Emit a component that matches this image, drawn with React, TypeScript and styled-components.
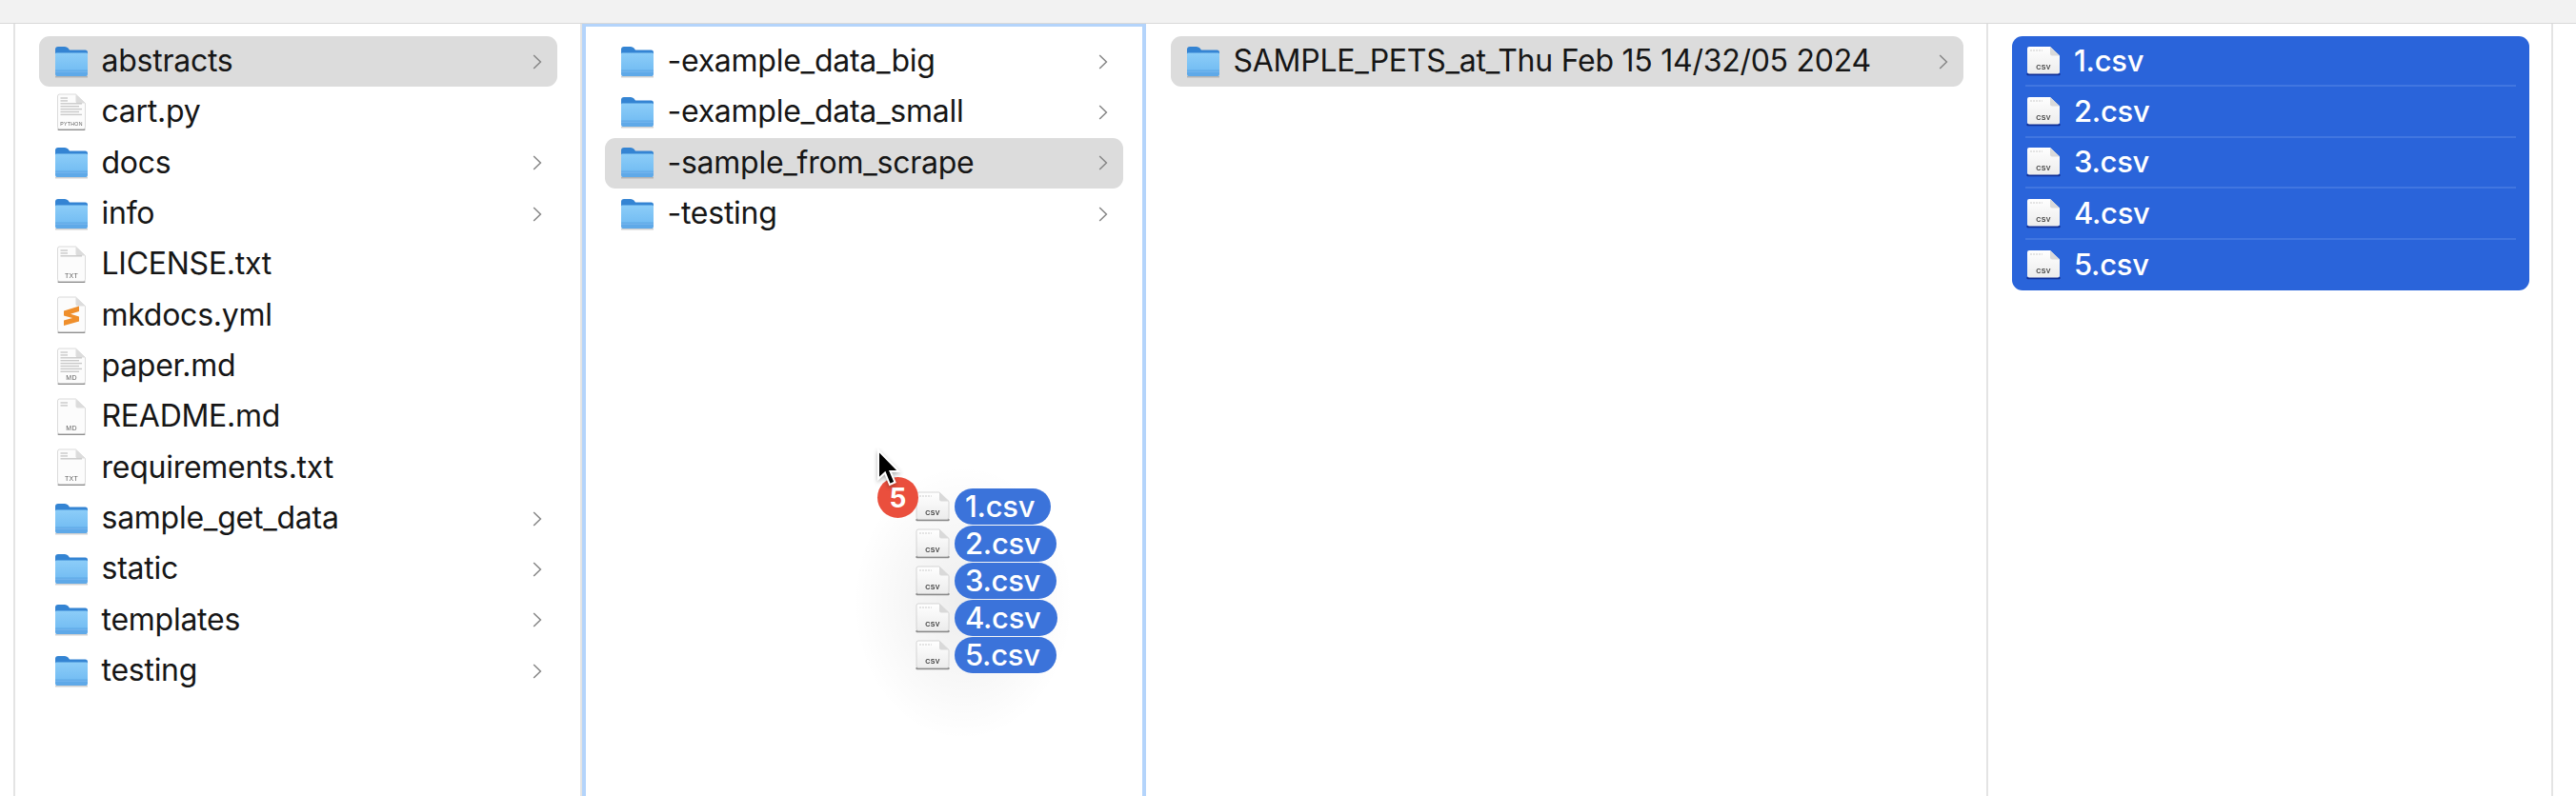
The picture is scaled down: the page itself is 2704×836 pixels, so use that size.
import styled, { createGlobalStyle } from 'styled-components';

type FileKind = 'py' | 'txt' | 'md' | 'mdShort' | 'yml' | 'csv';

type Entry = {
  name: string;
  kind: 'folder' | FileKind;
  active?: boolean;
};

const rootEntries: Entry[] = [
  { name: 'abstracts', kind: 'folder', active: true },
  { name: 'cart.py', kind: 'py' },
  { name: 'docs', kind: 'folder' },
  { name: 'info', kind: 'folder' },
  { name: 'LICENSE.txt', kind: 'txt' },
  { name: 'mkdocs.yml', kind: 'yml' },
  { name: 'paper.md', kind: 'md' },
  { name: 'README.md', kind: 'mdShort' },
  { name: 'requirements.txt', kind: 'txt' },
  { name: 'sample_get_data', kind: 'folder' },
  { name: 'static', kind: 'folder' },
  { name: 'templates', kind: 'folder' },
  { name: 'testing', kind: 'folder' },
];

const abstractEntries: Entry[] = [
  { name: '-example_data_big', kind: 'folder' },
  { name: '-example_data_small', kind: 'folder' },
  { name: '-sample_from_scrape', kind: 'folder', active: true },
  { name: '-testing', kind: 'folder' },
];

const scrapeEntries: Entry[] = [
  { name: 'SAMPLE_PETS_at_Thu Feb 15 14/32/05 2024', kind: 'folder', active: true },
];

const csvNames = ['1.csv', '2.csv', '3.csv', '4.csv', '5.csv'];

const labels: Record<FileKind, string> = {
  py: 'PYTHON',
  txt: 'TXT',
  md: 'MD',
  mdShort: 'MD',
  yml: '',
  csv: 'CSV',
};

const lineCounts: Record<FileKind, number> = {
  py: 7,
  txt: 3,
  md: 8,
  mdShort: 2,
  yml: 0,
  csv: 1,
};

function FolderIcon() {
  return (
    <IconSvg width="36" height="34" viewBox="0 0 36 34">
      <defs>
        <linearGradient id="folderBody" x1="0" y1="0" x2="0" y2="1">
          <stop offset="0" stopColor="#8ccdf8" />
          <stop offset="1" stopColor="#74bdf3" />
        </linearGradient>
      </defs>
      <path d="M1 32.6 h34" stroke="#000" strokeOpacity=".18" strokeWidth="1.6" />
      <path
        d="M1 4 Q1 1 4 1 H11 Q13 1 14.5 2.6 L16 4.4 H32.5 Q35 4.4 35 7 V12 H1 Z"
        fill="#3484d3"
      />
      <path d="M1 8.6 Q1 7.6 2.4 7.6 H33.6 Q35 7.6 35 8.6 V26 H1 Z" fill="url(#folderBody)" />
      <path d="M1 25.5 H35 V29.4 Q35 32 32.5 32 H3.5 Q1 32 1 29.4 Z" fill="#5fa9e8" />
      <path d="M1 27.2 H35" stroke="#7dbdf0" strokeWidth=".8" />
    </IconSvg>
  );
}

function CsvIcon({ inverted }: { inverted?: boolean }) {
  return (
    <IconSvg width="36" height="32" viewBox="0 0 36 32">
      <defs>
        <linearGradient id="csvPage" x1="0" y1="0" x2="0" y2="1">
          <stop offset="0" stopColor="#ffffff" />
          <stop offset="1" stopColor="#ececec" />
        </linearGradient>
      </defs>
      <path
        d="M1.5 30 H34.5"
        stroke={inverted ? '#0f2f96' : '#8a8a8a'}
        strokeWidth="2.4"
        strokeLinecap="round"
      />
      <path
        d="M1 3 Q1 1 3 1 H25 L35 10.5 V27.5 Q35 29.5 33 29.5 H3 Q1 29.5 1 27.5 Z"
        fill="url(#csvPage)"
        stroke={inverted ? 'none' : '#cbcbcb'}
        strokeWidth=".8"
      />
      <path d="M25 1 V8.5 Q25 10.5 27 10.5 H35 Z" fill="#d9d9d9" />
      <path d="M4 5 H17" stroke="#dcdcdc" strokeWidth="1.4" strokeDasharray="2 1" />
      <IconLabel x="18" y="25" fontSize="7" fontWeight="700" fill="#3f3f3f">
        CSV
      </IconLabel>
    </IconSvg>
  );
}

function FileIcon({ kind }: { kind: FileKind }) {
  const lines = lineCounts[kind];
  return (
    <IconSvg width="36" height="40" viewBox="0 0 36 40">
      <path d="M4.5 38 H31.5" stroke="#8f8f8f" strokeWidth="2" strokeLinecap="round" />
      <path
        d="M3.5 3 Q3.5 1 5.5 1 H22.5 L32.5 10.5 V35.5 Q32.5 37.5 30.5 37.5 H5.5 Q3.5 37.5 3.5 35.5 Z"
        fill="#fcfcfc"
        stroke="#d2d2d2"
        strokeWidth=".8"
      />
      <path d="M22.5 1 V8.5 Q22.5 10.5 24.5 10.5 H32.5 Z" fill="#dcdcdc" />
      {Array.from({ length: lines }, (_, i) => (
        <path
          key={i}
          d={`M6.5 ${5 + i * 2.9} H${i < 2 ? 14 : i % 2 ? 26 : 29}`}
          stroke="#c9c9c9"
          strokeWidth="1.4"
        />
      ))}
      {kind === 'yml' && (
        <path
          d="M10 15.5 L26 10.5 V16 L17 18.8 L26 21.4 V26.4 L10 31 V25.6 L19 23 L10 20.4 Z"
          fill="#ef8f2c"
        />
      )}
      {labels[kind] && (
        <IconLabel x="18" y="34" fontSize={kind === 'py' ? 5.2 : 7} fill="#5c5c5c">
          {labels[kind]}
        </IconLabel>
      )}
    </IconSvg>
  );
}

function Chevron() {
  return (
    <ChevronSvg width="10" height="16" viewBox="0 0 10 16">
      <path d="M1.2 1 L8.4 8 L1.2 15" fill="none" stroke="#868686" strokeWidth="1.5" />
    </ChevronSvg>
  );
}

function FinderRow({ entry }: { entry: Entry }) {
  return (
    <Row $active={entry.active}>
      <IconSlot>{entry.kind === 'folder' ? <FolderIcon /> : <FileIcon kind={entry.kind} />}</IconSlot>
      <RowName>{entry.name}</RowName>
      {entry.kind === 'folder' && <Chevron />}
    </Row>
  );
}

export default function App() {
  return (
    <>
      <GlobalStyle />
      <Window>
        <Toolbar />
        <Browser>
          <Gutter />
          <Column>
            {rootEntries.map((entry) => (
              <FinderRow key={entry.name} entry={entry} />
            ))}
          </Column>
          <FocusedColumn>
            {abstractEntries.map((entry) => (
              <FinderRow key={entry.name} entry={entry} />
            ))}
          </FocusedColumn>
          <Column>
            {scrapeEntries.map((entry) => (
              <FinderRow key={entry.name} entry={entry} />
            ))}
          </Column>
          <SelectionColumn>
            <SelectionGroup>
              {csvNames.map((name) => (
                <SelectedRow key={name}>
                  <IconSlot>
                    <CsvIcon inverted />
                  </IconSlot>
                  <SelectedName>{name}</SelectedName>
                </SelectedRow>
              ))}
            </SelectionGroup>
          </SelectionColumn>
          <Gutter />
        </Browser>

        <DragPreview>
          <DragShadow />
          {csvNames.map((name) => (
            <DragRow key={name}>
              <CsvIcon />
              <Pill>{name}</Pill>
            </DragRow>
          ))}
          <CountBadge>5</CountBadge>
          <CursorSvg width="30" height="42" viewBox="0 0 30 42">
            <path d="M3 2 V32 L10 25.5 L15 38 L20.5 35.5 L15.5 24 H24.5 Z" fill="#000" stroke="#fff" strokeWidth="2" />
          </CursorSvg>
        </DragPreview>
      </Window>
    </>
  );
}

const GlobalStyle = createGlobalStyle`
  html, body {
    margin: 0;
    height: 100%;
    background: #fff;
  }
  * {
    box-sizing: border-box;
  }
`;

const Window = styled.div`
  position: relative;
  width: 2704px;
  height: 836px;
  overflow: hidden;
  background: #fff;
  font-family: Inter, 'Liberation Sans', sans-serif;
  color: #161616;
`;

const Toolbar = styled.div`
  height: 25px;
  background: #f2f2f2;
  border-bottom: 1px solid #d9d9d9;
`;

const Browser = styled.div`
  display: grid;
  grid-template-columns: 16px 595px 592px 884px 593px 24px;
  height: 811px;
`;

const Gutter = styled.div`
  &:first-child {
    border-right: 2px solid #e4e4e4;
  }
`;

const Column = styled.div`
  padding: 13px 24px 0 26px;
  border-right: 2px solid #e4e4e4;

  &:nth-child(2) {
    padding-left: 25px;
  }
`;

const FocusedColumn = styled.div`
  padding: 10px 20px 0 20px;
  border: solid #b4d4fb;
  border-width: 3px 4px 0;
`;

const SelectionColumn = styled.div`
  padding: 13px 23px 0 25px;
  border-right: 2px solid #e4e4e4;
`;

const Row = styled.div<{ $active?: boolean }>`
  display: flex;
  align-items: center;
  height: 53.33px;
  padding: 0 16px;
  border-radius: 11px;
  background: ${(p) => (p.$active ? '#dcdcdc' : 'transparent')};
`;

const IconSlot = styled.div`
  display: flex;
  align-items: center;
  justify-content: center;
  width: 36px;
  flex-shrink: 0;
  margin-right: 14px;
`;

const IconSvg = styled.svg`
  display: block;
  filter: blur(0.35px);
`;

const IconLabel = styled.text`
  font-family: 'Liberation Sans', sans-serif;
  text-anchor: middle;
  letter-spacing: 0.3px;
`;

const ChevronSvg = styled.svg`
  flex-shrink: 0;
  margin-left: auto;
  filter: blur(0.3px);
`;

const RowName = styled.span`
  margin: -1px 0 0 -0.5px;
  font-size: 32px;
  line-height: 1;
  letter-spacing: -0.26px;
  white-space: nowrap;
`;

const SelectionGroup = styled.div`
  display: flex;
  flex-direction: column;
  height: 267px;
  padding: 0 14px;
  border-radius: 11px;
  background: #2a64da;
`;

const SelectedRow = styled.div`
  display: flex;
  align-items: center;
  height: 53.4px;
  padding: 0 1px;
  border-bottom: 2px solid #4176e0;

  &:last-child {
    border-bottom: none;
  }
`;

const SelectedName = styled.span`
  margin-top: -1px;
  color: #fff;
  font-size: 31px;
  font-weight: 500;
  line-height: 1;
  letter-spacing: -0.3px;
`;

const DragPreview = styled.div`
  position: absolute;
  left: 961px;
  top: 513px;
  display: flex;
  flex-direction: column;
  gap: 1px;
`;

const DragShadow = styled.div`
  position: absolute;
  left: -70px;
  top: -30px;
  width: 240px;
  height: 300px;
  background: radial-gradient(ellipse at center, rgba(0, 0, 0, 0.07), rgba(0, 0, 0, 0) 68%);
`;

const DragRow = styled.div`
  position: relative;
  display: flex;
  align-items: center;
  height: 38px;
  gap: 5px;
`;

const Pill = styled.span`
  display: flex;
  align-items: center;
  height: 38px;
  padding: 0 17px 2px 11px;
  border-radius: 19px;
  background: #3b73da;
  color: #fff;
  font-size: 31px;
  font-weight: 500;
  letter-spacing: -0.3px;
`;

const CountBadge = styled.div`
  position: absolute;
  left: -40px;
  top: -12px;
  display: flex;
  align-items: center;
  justify-content: center;
  width: 43px;
  height: 43px;
  border-radius: 50%;
  background: #ea4f3d;
  color: #fff;
  font-size: 28px;
  font-weight: 700;
`;

const CursorSvg = styled.svg`
  position: absolute;
  left: -42px;
  top: -42px;
  filter: blur(0.4px) drop-shadow(0 2px 2px rgba(0, 0, 0, 0.3));
`;
